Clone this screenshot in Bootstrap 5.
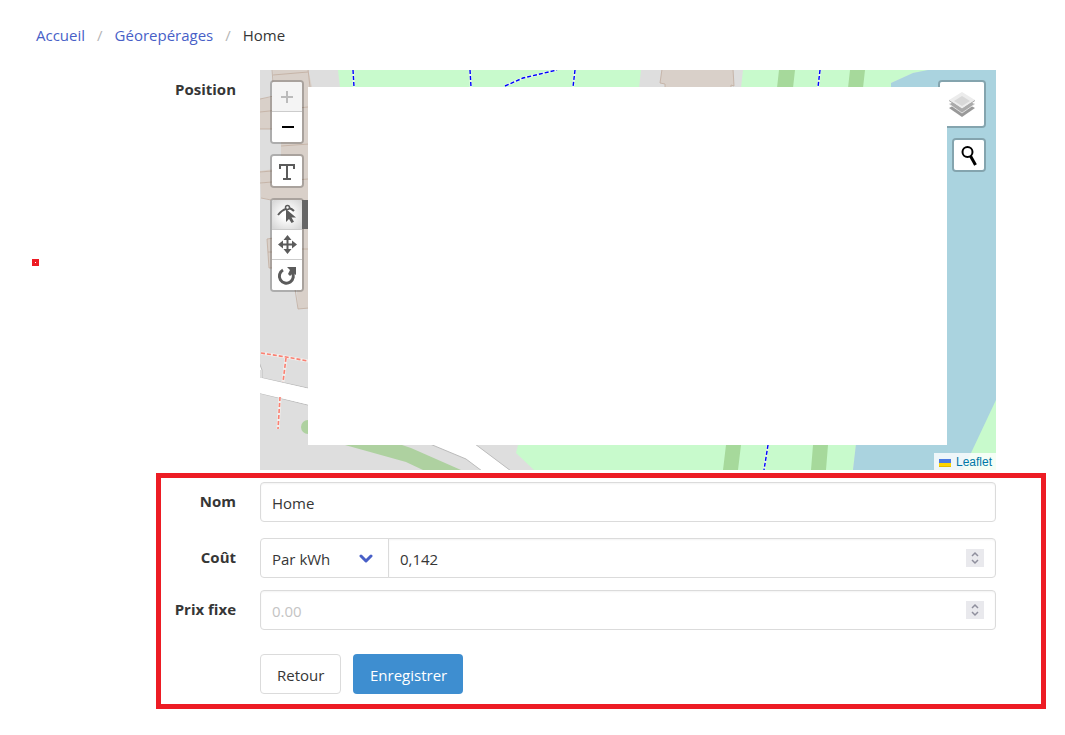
<!DOCTYPE html>
<html lang="fr">
<head>
<meta charset="utf-8">
<meta name="viewport" content="width=device-width, initial-scale=1">
<title>Géorepérages - Home</title>
<link href="https://cdn.jsdelivr.net/npm/bootstrap@5.3.0/dist/css/bootstrap.min.css" rel="stylesheet">
<style>
  body { font-family: "Open Sans", "Noto Sans", sans-serif; font-size: 15px; line-height: 24px; color: #363636; background: #fff; }
  .crumbs { height: 70px; padding-left: 36px; }
  .crumbs .breadcrumb { --bs-breadcrumb-item-padding-x: 12px; --bs-breadcrumb-divider-color: #b5b5b5; --bs-breadcrumb-item-active-color: #363636; }
  .crumbs a { color: #485fc7; text-decoration: none; }
  .page { padding: 0 19px 24px 156px; }
  .map-row { padding: 0 50px 0 5px; margin-bottom: 3px; }
  .field-name { width: 75px; padding-top: 7px; text-align: right; font-weight: 700; white-space: nowrap; flex: none; }
  .framed { border: 5px solid #ed1c24; padding: 4px 45px 10px 0; }
  .framed .form-control, .framed .form-select { height: 40px; font-size: 15px; padding: 8px 11px 6px; color: #363636; border-color: #dbdbdb; border-radius: 4px; }
  .framed .form-control { box-shadow: inset 0 1px 2px rgba(10,10,10,.05); }
  .framed .form-control::placeholder { color: #c4c4c4; }
  .framed .input-group > .unit { flex: 0 0 129px; border-radius: 4px 0 0 4px; background: #fff url("data:image/svg+xml,%3Csvg xmlns='http://www.w3.org/2000/svg' viewBox='0 0 14 9'%3E%3Cpath d='M2 2l5 5 5-5' fill='none' stroke='%23485fc7' stroke-width='3' stroke-linecap='round' stroke-linejoin='round'/%3E%3C/svg%3E") no-repeat right 15px center / 14px 9px; }
  .framed .input-group > .form-control.amount { border-radius: 0 4px 4px 0 !important; margin-left: -1px; }
  .stepper { right: 12px; top: 11px; width: 18px; height: 18px; background: #e9e9ed; border: 0; padding: 0; display: flex; z-index: 6; }
  .framed .btn { height: 40px; font-size: 15px; padding: 8px 16px 6px; line-height: 24px; border-radius: 4px; }
  .btn-back { border-color: #dbdbdb; color: #363636; width: 81px; }
  .btn-save, .btn-save:hover { background: #3e8ed0; color: #fff; width: 110px; }
  .map-area { height: 400px; overflow: hidden; background: #dedede; }
  .map-area > svg { width: 100%; height: 100%; display: block; }
  .blank-zone { inset: 17px 49px 25px 48px; background: #fff; }
  .tools { top: 10px; display: flex; flex-direction: column; gap: 10px; }
  .tools-left { left: 10px; }
  .tools-right { right: 10px; align-items: flex-end; }
  .tool-bar { border: 2px solid rgba(0,0,0,.22); border-radius: 4px; background: #fff; background-clip: padding-box; overflow: hidden; }
  .tool-bar button { display: block; width: 30px; height: 30px; border: 0; border-bottom: 1px solid #ccc; background: #fff; padding: 0; }
  .tool-bar button:last-child { border-bottom: 0; }
  .tool-bar button:disabled { background: #f4f4f4; }
  .tool-bar svg { display: block; width: 30px; height: 29px; }
  .tool-bar button.pressed { background: radial-gradient(#fff 20%, #d8d8d8 90%); }
  .tool-bar button.layer-pick, .layer-pick svg { width: 44px; height: 44px; }
  .flyout { left: 42px; top: 130px; width: 6px; height: 29px; background: #666; }
  .credit { right: 0; bottom: 0; height: 17px; padding: 0 4px 0 5px; font: 12px/18px "Liberation Sans", Arial, sans-serif; background: rgba(255,255,255,.8); }
  .credit a { color: #0078a8; text-decoration: none; }
  .credit svg { margin-right: 2px; }
  .red-dot { left: 32px; top: 259px; width: 7px; height: 7px; border: 3px solid #ed1c24; }
</style>
<script src="https://cdn.jsdelivr.net/npm/bootstrap@5.3.0/dist/js/bootstrap.bundle.min.js"></script>
</head>
<body class="position-relative">
<nav class="crumbs d-flex align-items-center" aria-label="Fil d'Ariane">
  <ol class="breadcrumb mb-0">
    <li class="breadcrumb-item"><a href="#">Accueil</a></li>
    <li class="breadcrumb-item"><a href="#">Géorepérages</a></li>
    <li class="breadcrumb-item active" aria-current="page">Home</li>
  </ol>
</nav>
<div class="red-dot position-absolute"></div>

<main class="page">
  <div class="map-row d-flex gap-4">
    <div class="field-name">Position</div>
    <div class="map-area position-relative flex-fill">
      <svg viewBox="260 70 736 400" preserveAspectRatio="xMinYMin slice" aria-hidden="true">
        <path fill="#dedede" d="M260 70h736v400H260z"/>
        <!-- buildings -->
        <g fill="#d9d0c9" stroke="#c2ada0" stroke-width=".8">
          <path d="M273 70L274 97 260 99V129H281V144L260 172 261 198 281 201V262L295 263 298 309 312 308V87L308 69z" stroke="none"/>
          <path d="M260 129H281V170L260 172z" fill="#dedede" stroke="none"/>
          <path d="M261 200H281V237H270V268H294L296 290V300H261z" fill="#dedede" stroke="none"/>
          <path d="M281 144h27v28l-48 5v-6l21-3z" stroke="none"/>
          <path d="M272 69l2 28M273 75l35-3M308 69l2 18M260 99l14-3M260 112l48-5M260 129h12M281 146l28-2M260 172l12-1M260 183l48-4M261 198l10 2M295 289l3 20 11-1M300 249h8" fill="none"/>
          <path d="M267 239l6-1v30h-4z"/><path d="M268 252h5"/>
          <path d="M662 69l-2 14 5 1v4h66v-3l3 1-1-17z"/>
        </g>
        <!-- meadows -->
        <g fill="#c8facc">
          <path d="M338 70H641L639 88H340z"/>
          <path d="M743 70H930L913 73 891 83V88H741z"/>
          <path d="M518 445L516 453 534 470H853L856 445z"/>
        </g>
        <path fill="#aad3df" d="M928 70L913 73 891 83V200L856 444 853 470H996V70z"/>
        <path fill="#c8facc" d="M996 400V470H963z"/>
        <path fill="#a6d99b" d="M779 70h16l-2 18h-16zM850 70h15l-2 18h-15zM726 445h15l-3 25h-15zM813 445h15l-2 25h-15z"/>
        <path fill="#aed1a0" d="M345 445L402 445 411 448 461 470H423L406 462z"/>
        <circle cx="308" cy="427" r="7" fill="#aed1a0"/>
        <!-- roads -->
        <g fill="#fff" stroke="#bbb">
          <path d="M259 362l3 8v8l50 11v17l-53-13"/>
          <path d="M430 444L466 459 482 471H511L475 444z"/>
        </g>
        <path d="M257 370h5v8l-5 15z" fill="#dedede" stroke="none"/>
        <path d="M259 378h3l48 11v16l-51-12z" fill="#fff"/>
        <g fill="none" stroke="#f2eeec" stroke-width="3"><path d="M261 353l25 4 22 4M286 358l-3 24M280 397l-2 32"/></g>
        <g fill="none" stroke="#fa8072" stroke-width="1.6" stroke-dasharray="4 2"><path d="M261 353l25 4 22 4M286 358l-3 24M280 397l-2 32"/></g>
        <g fill="none" stroke="#e4fae8" stroke-width="2.5"><path d="M353 70l1 17M470 70l1 17M505 86l18-8 34-8M575 70l-2 17M820 70l-2 17M768 445l-4 25"/></g>
        <g fill="none" stroke="#00f" stroke-width="1.4" stroke-dasharray="4 2"><path d="M353 70l1 17M470 70l1 17M505 86l18-8 34-8M575 70l-2 17M820 70l-2 17M768 445l-4 25"/></g>
      </svg>

      <div class="tools tools-left position-absolute">
        <div class="tool-bar">
          <button type="button" disabled aria-label="Zoom avant"><svg viewBox="0 0 30 29"><path d="M15 9v12M9 15h12" stroke="#bbb" stroke-width="2"/></svg></button>
          <button type="button" aria-label="Zoom arrière"><svg viewBox="0 0 30 29"><path d="M10 14h12" stroke="#000" stroke-width="2"/></svg></button>
        </div>
        <div class="tool-bar">
          <button type="button" aria-label="Texte"><svg viewBox="0 0 30 29"><path d="M8 12V8h14v4M15 8v14M11 22h8" fill="none" stroke="#5b5b5b" stroke-width="2"/></svg></button>
        </div>
        <div class="tool-bar">
          <button type="button" class="pressed" aria-label="Modifier"><svg viewBox="0 0 30 29"><path d="M6 15q4-5 8-6M17 8q3 1 5 3" fill="none" stroke="#5b5b5b" stroke-width="2"/><circle cx="15.500" cy="7.500" r="2" fill="none" stroke="#5b5b5b" stroke-width="1.500"/><path d="M14 9v13l3-3 2.500 4 2.500-1.300-2.500-4.200H24z" fill="#5b5b5b"/></svg></button>
          <button type="button" aria-label="Déplacer"><svg viewBox="0 0 30 29"><path d="M15.500 8v14M9 14.500h14" stroke="#5b5b5b" stroke-width="2"/><path d="M15.500 5l4 5h-8zM15.500 24l4-5h-8zM6 14.500l5-4v8zM25 14.500l-5-4v8z" fill="#5b5b5b"/></svg></button>
          <button type="button" aria-label="Pivoter"><svg viewBox="0 0 30 29"><path d="M11 9a7 7 0 1 0 9 2" fill="none" stroke="#5b5b5b" stroke-width="3"/><path d="M15 6h9v8l-3-2-3 3-2-2 2-4z" fill="#5b5b5b"/></svg></button>
        </div>
      </div>
      <div class="flyout position-absolute"></div>
      <div class="tools tools-right position-absolute">
        <div class="tool-bar">
          <button type="button" class="layer-pick" aria-label="Calques"><svg viewBox="0 0 44 44"><path d="M9 26l13-7 13 7-13 9z" fill="#999"/><path d="M9 22l13-7 13 7-13 9z" fill="#aaa" stroke="#eee" stroke-width=".8"/><path d="M9 18l13-8 13 8-13 9z" fill="#ececec"/><path d="M9 18.500l13 8.500 13-8.500" fill="none" stroke="#aaa"/><path d="M14 19l8-5 8 5-8 5z" fill="#d8d8d8"/></svg></button>
        </div>
        <div class="tool-bar">
          <button type="button" aria-label="Rechercher"><svg viewBox="0 0 30 29"><circle cx="13.500" cy="11" r="5" fill="none" stroke="#000" stroke-width="2"/><path d="M16.500 15l5 9" stroke="#000" stroke-width="3"/></svg></button>
        </div>
      </div>
      <div class="blank-zone position-absolute"></div>
      <div class="credit position-absolute"><a href="#"><svg width="12" height="8" viewBox="0 0 12 8" aria-hidden="true"><path fill="#4c7be1" d="M0 0h12v4H0z"/><path fill="#ffd500" d="M0 4h12v3H0z"/><path fill="#e0bc00" d="M0 7h12v1H0z"/></svg> Leaflet</a></div>
    </div>
  </div>

  <form class="framed">
    <div class="d-flex gap-4 mb-3">
      <label class="field-name" for="nom">Nom</label>
      <div class="flex-fill"><input id="nom" class="form-control" type="text" value="Home"></div>
    </div>
    <div class="d-flex gap-4">
      <label class="field-name" for="cout">Coût</label>
      <div class="input-group flex-nowrap position-relative">
        <select class="form-select unit" aria-label="Type de coût"><option>Par kWh</option></select>
        <input id="cout" class="form-control amount" type="text" inputmode="decimal" value="0,142">
        <button type="button" class="stepper position-absolute" tabindex="-1" aria-label="Ajuster le coût"><svg width="18" height="18" viewBox="0 0 18 18"><path d="M6 7l3-3 3 3M6 11l3 3 3-3" fill="none" stroke="#8f8f9d" stroke-width="1.500"/></svg></button>
      </div>
    </div>
    <div class="d-flex gap-4 mt-2 pt-1">
      <label class="field-name" for="prix">Prix fixe</label>
      <div class="flex-fill position-relative">
        <input id="prix" class="form-control" type="text" inputmode="decimal" placeholder="0.00">
        <button type="button" class="stepper position-absolute" tabindex="-1" aria-label="Ajuster le prix fixe"><svg width="18" height="18" viewBox="0 0 18 18"><path d="M6 7l3-3 3 3M6 11l3 3 3-3" fill="none" stroke="#8f8f9d" stroke-width="1.500"/></svg></button>
      </div>
    </div>
    <div class="d-flex gap-4 mt-4">
      <div class="field-name"></div>
      <div class="d-flex gap-2">
        <button type="button" class="btn btn-back me-1">Retour</button>
        <button type="submit" class="btn btn-save">Enregistrer</button>
      </div>
    </div>
  </form>
</main>
</body>
</html>
